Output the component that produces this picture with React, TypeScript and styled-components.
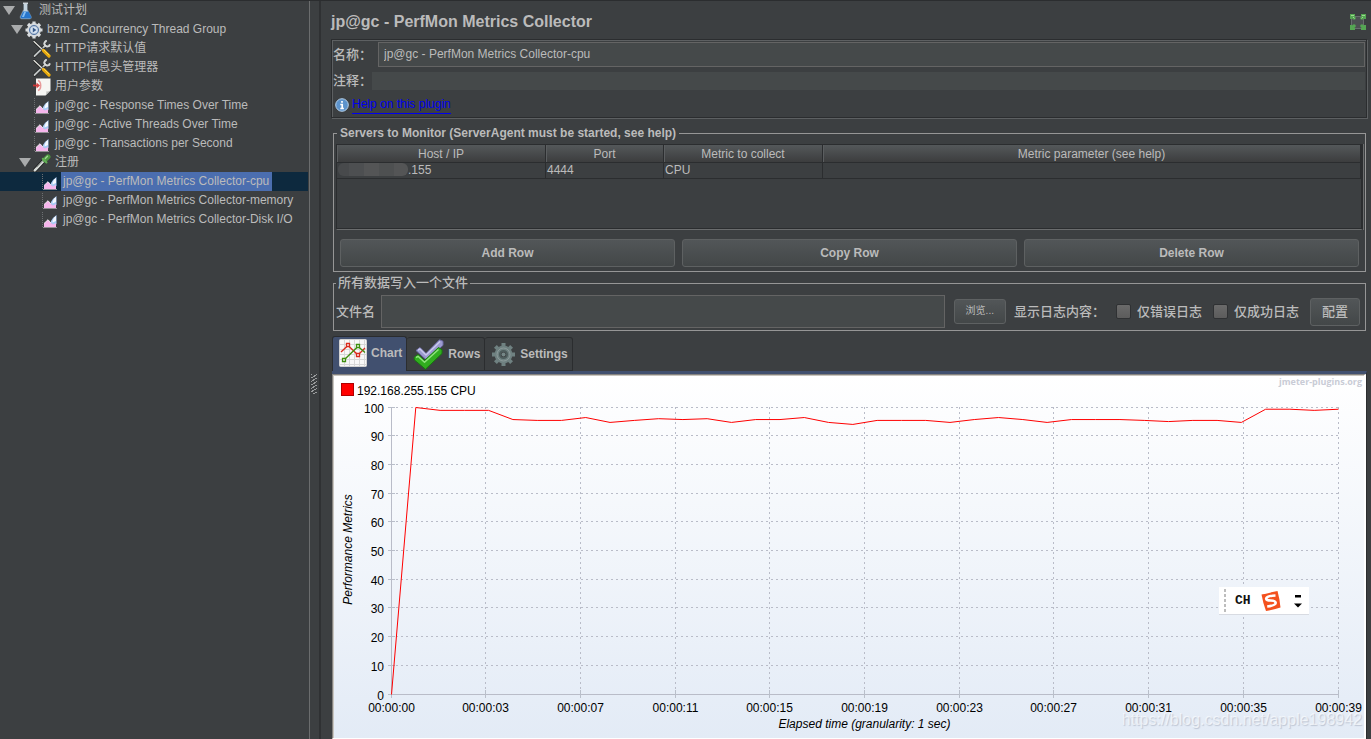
import React, { useLayoutEffect, useRef, useState } from "react";
import styled, { createGlobalStyle, css } from "styled-components";

const sans = `"Liberation Sans", Arial, "Noto Sans CJK SC", sans-serif`;

const GlobalStyle = createGlobalStyle`
  *, *::before, *::after { box-sizing: border-box; }
  body {
    margin: 0;
    background: #3c3f41;
    color: #bbbbbb;
    font: 12px/14px ${sans};
  }
  button, input { font: inherit; color: inherit; }
`;

const Window = styled.div`
  display: flex;
  min-height: 100vh;
  border-top: 1px solid #2b2d2f;
`;

/* ---------- test plan tree ---------- */

const Sidebar = styled.nav`
  flex: 0 0 310px;
  padding-right: 1px;
  border-right: 1px solid #6b6d6e;
`;

const Tree = styled.ul`
  list-style: none;
  margin: 0;
  padding: 0;
`;

const TreeRow = styled.li<{ $level: number; $selected?: boolean }>`
  display: flex;
  align-items: center;
  gap: 2px;
  height: 19px;
  padding-left: ${(p) => 3 + p.$level * 8}px;
  background: ${(p) => (p.$selected ? "#0d293e" : "transparent")};
  white-space: nowrap;
`;

const TreeArrow = styled.span<{ $open?: boolean }>`
  flex: none;
  width: 12px;
  height: 9px;
  background: ${(p) => (p.$open ? "#a9abac" : "transparent")};
  clip-path: polygon(0 0, 100% 0, 50% 100%);
`;

const TreeIcon = styled.span`
  flex: none;
  display: flex;
  width: 18px;
  height: 18px;
`;

const TreeLabel = styled.span<{ $selected?: boolean }>`
  padding: 0 3px 0 2px;
  line-height: 19px;
  background: ${(p) => (p.$selected ? "#4b6eaf" : "transparent")};
`;

const Splitter = styled.div`
  flex: 0 0 11px;
  display: flex;
  align-items: center;
  border-right: 2px solid #2f3133;
  padding-left: 1px;
`;

const Grip = styled.span`
  width: 6px;
  height: 20px;
  margin-top: 28px;
  background: repeating-linear-gradient(150deg, #9a9c9d 0 1px, #3c3f41 1px 3px);
`;

/* ---------- right hand side ---------- */

const Main = styled.main`
  flex: 1;
  min-width: 0;
  display: flex;
  flex-direction: column;
  padding: 0 4px 0 10px;
`;

const Header = styled.header`
  display: flex;
  justify-content: space-between;
  align-items: center;
  height: 38px;
  padding: 4px 1px 0 0;
`;

const Title = styled.h1`
  margin: 0;
  font-size: 16px;
  line-height: 20px;
`;

const IconButton = styled.button`
  display: flex;
  padding: 0;
  border: 0;
  background: none;
`;

const InfoPanel = styled.section`
  display: flex;
  flex-direction: column;
  height: 79px;
  padding: 2px 1px 0;
  border: 1px solid #2b2d2f;
  box-shadow: 1px 1px 0 #5d6062, inset 1px 1px 0 #5d6062;
`;

const Field = styled.div<{ $gap: number }>`
  display: flex;
  align-items: center;
  gap: ${(p) => p.$gap}px;
  & + & { margin-top: 5px; }
`;

const FormLabel = styled.label`
  flex: none;
  font-size: 13px;
  font-weight: 500;
  line-height: 18px;
  white-space: nowrap;
`;

const TextInput = styled.input<{ $plain?: boolean }>`
  flex: 1;
  min-width: 0;
  height: ${(p) => (p.$plain ? 18 : 25)}px;
  padding: 0 5px 2px;
  border: ${(p) => (p.$plain ? "0" : "1px solid #646464")};
  background: #45494a;
  outline: none;
`;

const FileInput = styled(TextInput)`
  height: 33px;
`;

const HelpRow = styled.div`
  display: flex;
  align-items: center;
  gap: 3px;
  margin-top: 6px;
  padding-left: 2px;
`;

const HelpLink = styled.a`
  color: #0000ee;
  text-decoration: none;
  border-bottom: 1px solid #0000ee;
  line-height: 16px;
  height: 18px;
`;

const Group = styled.fieldset`
  min-width: 0;
  margin: 8px 1px 0 2px;
  padding: 4px 2px;
  border: 1px solid #969696;
  & + & { margin-top: 4px; padding: 5px 5px 2px 2px; }
`;

const Legend = styled.legend<{ $large?: boolean }>`
  margin-left: ${(p) => (p.$large ? 0 : 1)}px;
  padding: 0 ${(p) => (p.$large ? 2 : 3)}px;
  font-size: ${(p) => (p.$large ? 13 : 12)}px;
  font-weight: ${(p) => (p.$large ? 500 : "bold")};
  line-height: 14px;
  height: 14px;
`;

const TableBox = styled.div`
  height: 86px;
  border: 1px solid #2b2d2f;
  border-right-width: 2px;
  border-bottom: 1px solid #6b6d6e;
  box-shadow: inset 0 -1px 0 #2b2d2f, 1px 0 0 #6b6d6e;
`;

const Table = styled.table`
  width: 100%;
  table-layout: fixed;
  border-collapse: separate;
  border-spacing: 0;
`;

const HeadCell = styled.th<{ $width?: number }>`
  ${(p) => p.$width && css`width: ${p.$width}px;`}
  height: 18px;
  padding: 0;
  background: linear-gradient(#54585a, #3c3d3e);
  border-right: 1px solid #2b2d2f;
  border-bottom: 1px solid #2b2d2f;
  box-shadow: inset 1px 0 0 #5b5e60;
  font-weight: normal;
`;

const Cell = styled.td`
  height: 16px;
  padding: 0 0 1px 1px;
  line-height: 14px;
  border-right: 1px solid #2b2d2f;
  border-bottom: 1px solid #2b2d2f;
`;

const MaskedHost = styled.span`
  display: inline-block;
  vertical-align: top;
  width: 70px;
  height: 13px;
  border-radius: 6px;
  background: linear-gradient(90deg, #484a4c 0 11px, #4d4f51 11px 26px, #545556 26px 41px, #4e5051 41px 56px, #545556 56px);
`;

const ButtonRow = styled.div`
  display: grid;
  grid-template-columns: repeat(3, 1fr);
  gap: 7px;
  margin: 9px 4px 0 4px;
`;

const Button = styled.button<{ $small?: boolean }>`
  flex: none;
  height: ${(p) => (p.$small ? 25 : 28)}px;
  padding: 0 11px 1px;
  border: 1px solid #5e6162;
  border-radius: 3px;
  background: linear-gradient(#525658, #434748);
  font-size: ${(p) => (p.$small ? 10 : 12)}px;
  font-weight: ${(p) => (p.$small ? "normal" : "bold")};
  white-space: nowrap;
`;

const ConfigButton = styled(Button)`
  width: 50px;
  padding: 0;
  font-size: 13px;
  font-weight: 500;
`;

const FileRow = styled.div`
  display: flex;
  align-items: center;
  gap: 6px;
`;

const LogOptions = styled.div`
  display: flex;
  align-items: center;
  gap: 11px;
  padding-left: 3px;
`;

const BrowseGroup = styled.div`
  display: flex;
  align-items: center;
  gap: 8px;
`;

const CheckLabel = styled(FormLabel)`
  display: flex;
  align-items: center;
  gap: 6px;
`;

const Checkbox = styled.input`
  appearance: none;
  width: 15px;
  height: 15px;
  margin: 0;
  border: 1px solid #2f3133;
  border-radius: 2px;
  background: linear-gradient(#6a6a6a, #5c5c5c);
`;

/* ---------- tabs and chart ---------- */

const Tabs = styled.div`
  display: flex;
  align-items: flex-end;
  height: 35px;
  margin: 5px 0 0 1px;
`;

const Tab = styled.button<{ $active?: boolean }>`
  display: flex;
  align-items: center;
  gap: 4px;
  height: ${(p) => (p.$active ? 35 : 34)}px;
  padding: 0 4px ${(p) => (p.$active ? 2 : 0)}px 6px;
  border: 1px solid #2b2d2f;
  border-left-width: ${(p) => (p.$active ? 1 : 0)}px;
  border-bottom: ${(p) => (p.$active ? "0" : "1px solid #2b2d2f")};
  border-radius: 3px 3px 0 0;
  background: ${(p) => (p.$active ? "#41506f" : "transparent")};
  font-weight: bold;
`;

const ChartPane = styled.section`
  position: relative;
  flex: 1;
  display: flex;
  flex-direction: column;
  min-height: 300px;
  border-right: 1px solid #2b2d2f;
  border-top: 3px solid #41506f;
  margin-left: 1px;
`;

const Plot = styled.div`
  flex: 1;
  display: flex;
  min-height: 0;
  border: 1px solid #84827f;
  border-right: 2px solid #fff;
  border-bottom: 1px solid #fff;
  background: linear-gradient(#ffffff, #e3ebf6);
  box-shadow: inset 1px 1px 0 #c9c6c0;
`;

const ChartSvg = styled.svg`
  flex: 1;
  min-width: 0;
  min-height: 0;
  font: 12px ${sans};
  fill: #000;
`;

const ImeBar = styled.div`
  position: absolute;
  right: 57px;
  bottom: 124px;
  display: flex;
  align-items: center;
  width: 90px;
  height: 28px;
  padding: 0 7px 0 5px;
  background: #fff;
  border-bottom: 1px solid #d8dbe2;
  color: #111;
`;

const ImeGrip = styled.span`
  width: 2px;
  height: 24px;
  margin-right: 9px;
  background: repeating-linear-gradient(#bdbdbd 0 3px, #fff 3px 5px);
`;

const ImeLang = styled.span`
  width: 25px;
  font: bold 13px "Liberation Mono", monospace;
`;

const ImeMenu = styled.span`
  display: flex;
  margin-left: auto;
`;

const Watermark = styled.span`
  position: absolute;
  right: 4px;
  bottom: 9px;
  color: rgba(255, 255, 255, 0.6);
  font-size: 16px;
  line-height: 20px;
  text-shadow: 1px 1px 1px rgba(120, 130, 150, 0.35);
`;

/* ---------- icons ---------- */

const FlaskIcon = () => (
  <svg width="18" height="18" viewBox="0 0 18 18">
    <path d="M6.500 1.500h4v6l3.800 7.200q.6 2-1.400 2.300H4.500q-2-.3-1.400-2.300l3.400-7.200z" fill="#c4d4df" stroke="#66727c" strokeWidth=".7" />
    <path d="M6 9.500h5.600l2.700 5.500q.2 1.300-1 1.500H4.500q-1.300-.2-1-1.500z" fill="#2776cc" />
    <path d="M7 10h2l-2 5H5z" fill="#84bdf2" />
    <path d="M6 1.200h5" stroke="#e6eef3" strokeWidth="1.200" />
  </svg>
);

const ThreadGroupIcon = () => (
  <svg width="18" height="18" viewBox="0 0 18 18">
    <g fill="#d9dde0" stroke="#d9dde0">
      <circle cx="9" cy="9" r="6.400" />
      <path d="M9 .5v17M.5 9h17M3 3l12 12M15 3L3 15" strokeWidth="3.200" />
    </g>
    <circle cx="9" cy="9" r="4.600" fill="#a9bdd6" stroke="#5878a5" />
    <circle cx="9" cy="9" r="3.300" fill="#d5e2f1" />
    <path d="M7.800 6.600l3.600 2.400-3.600 2.400z" fill="#36598b" />
  </svg>
);

const ToolsIcon = () => (
  <svg width="18" height="18" viewBox="0 0 18 18" fill="none" strokeLinecap="round">
    <path d="M1.500 16L12.500 5.300" stroke="#1e2021" strokeWidth="3.200" />
    <path d="M1.500 16L12.500 5.300" stroke="#bfc3c3" strokeWidth="1.800" />
    <path d="M12 2q-1.500 2 .2 3.600T16 6M12 2l1-1M16 6l.6-1" stroke="#d6d9d9" strokeWidth="2" />
    <path d="M1 1.500L10 10" stroke="#1e2021" strokeWidth="2.800" />
    <path d="M1 1.500L10 10" stroke="#e2e2dc" strokeWidth="1.300" />
    <path d="M10.500 10.500l5.500 5.500" stroke="#e8a90c" strokeWidth="3.200" />
    <path d="M11 10l5 5" stroke="#ffd54a" strokeWidth="1" />
  </svg>
);

const ParamsIcon = () => (
  <svg width="18" height="18" viewBox="0 0 18 18">
    <path d="M3 .5h14.500v12l-5 5H3z" fill="#f6f6f3" />
    <path d="M17.500 12.500l-5 5q1.500-2 .8-4.200 2 .6 4.200-.8z" fill="#bcbdba" />
    <path d="M5 2.500q2.700 1 2.700 5T5 12.500" stroke="#e79a9a" strokeWidth="1.500" fill="none" />
    <path d="M0 7.500h4.500" stroke="#cc3333" strokeWidth="1.800" fill="none" />
    <path d="M3.500 4.500L7 7.500l-3.500 3z" fill="#d84545" />
  </svg>
);

const GraphIcon = () => (
  <svg width="18" height="18" viewBox="0 0 18 18">
    <path d="M1.500 1v16" stroke="#6d7072" strokeDasharray="1 1" />
    <path d="M10 12.500q-.5-3 2-5.500l3.500-3v9l-3 2z" fill="#a9cbf5" />
    <path d="M11.500 11.500q0-4 3.500-6.500v5z" fill="#f5f9ff" />
    <path d="M3 16v-3.500l4-3.800 3 3.300 2 1.500 3-1.500V16z" fill="#f6b6ec" />
    <path d="M3 12.500l4-3.800 3 3.300" fill="none" stroke="#fff" strokeWidth=".8" />
    <path d="M2 16.500h14" stroke="#a9a5ab" strokeWidth=".8" />
  </svg>
);

const SamplerIcon = () => (
  <svg width="18" height="18" viewBox="0 0 18 18" strokeLinecap="round">
    <path d="M2 16l9-9.500" stroke="#202223" strokeWidth="4" />
    <path d="M1.800 16.300L11.500 6" stroke="#d9ddd9" strokeWidth="2.500" />
    <path d="M4 13l6-6.500" stroke="#8c928e" strokeWidth="1" />
    <path d="M12 5.800l3-3" stroke="#4c9440" strokeWidth="5" />
    <path d="M9.800 4.800l3.700 3.700" stroke="#62ad55" strokeWidth="2" />
    <path d="M12.300 4.500l2.200-2.300" stroke="#a3d896" strokeWidth="1.300" />
  </svg>
);

const InfoIcon = () => (
  <svg width="14" height="14" viewBox="0 0 14 14">
    <circle cx="7" cy="7" r="6.300" fill="#5c93cc" stroke="#b4cfe8" />
    <path d="M7 3v1.800M5.300 6.500H7.200v4M5.300 10.500h3.600" stroke="#fff" strokeWidth="1.700" fill="none" />
  </svg>
);

const ExpandIcon = () => (
  <svg width="16" height="16" viewBox="0 0 16 16">
    <rect x="1.500" y="2.500" width="12" height="12" fill="#4c5052" stroke="#686c6e" />
    <g fill="#55a653">
      <path d="M0 0h5v2L2 5H0zM16 0v5h-2l-3-3V0zM0 16v-5h2l3 3v2zM16 16h-5v-2l3-3h2z" />
      <circle cx="4" cy="4" r="1.800" />
      <circle cx="12" cy="4" r="1.800" />
      <circle cx="4" cy="12" r="1.800" />
      <circle cx="12" cy="12" r="1.800" />
    </g>
    <path d="M1 1.500h3M12 1.500h3M3 3l1.500 1.500M13 3l-1.500 1.500" stroke="#9bdc8c" />
  </svg>
);

const ChartTabIcon = () => (
  <svg width="28" height="28" viewBox="0 0 28 28" fill="none">
    <rect x=".5" y=".5" width="27" height="27" rx="1" fill="#f8f8f8" stroke="#d2d2d2" />
    <path d="M5.500 1v26M10.500 1v26M15.500 1v26M20.500 1v26M25.500 1v26M1 5.500h26M1 10.500h26M1 15.500h26M1 20.500h26M1 25.500h26" stroke="#d8d8d8" />
    <path d="M2 13L9 6.500 19 16l7-7" stroke="#d92b1e" strokeWidth="1.300" />
    <path d="M5 21L19 7.500l7 6" stroke="#3f8f0f" strokeWidth="1.300" />
    <g fill="#fff" strokeWidth="1.300">
      <path d="M7.500 4.500h3v3h-3zM17.500 14.500h3v3h-3z" stroke="#d92b1e" />
      <path d="M3.500 19.500h3v3h-3zM17.500 5.500h3v3h-3z" stroke="#3f8f0f" />
    </g>
  </svg>
);

const CheckTabIcon = () => (
  <svg width="31" height="31" viewBox="0 0 31 31" strokeLinejoin="round">
    <path d="M3 11.500l4-3 6 6L26.500.800l3.500 1.500v4L13.500 21z" fill="#9c9bd0" stroke="#6d6ba6" />
    <path d="M5 11l2-1 6 6L27 2.500" stroke="#c9c8ee" strokeWidth="1.500" fill="none" />
    <path d="M1 18.500l4-3 6.500 6L25.500 8.500l3.500 2.300v3.700L12.500 30.200 1.500 21z" fill="#31ad1f" stroke="#177a0e" />
    <path d="M3 18.500l2-1.200 6.500 6L25.500 10.500" stroke="#8ee37d" strokeWidth="1.500" fill="none" />
  </svg>
);

const GearTabIcon = () => (
  <svg width="25" height="25" viewBox="0 0 25 25">
    <g stroke="#6f8181" fill="#6f8181">
      <path d="M12.500 1v23M1 12.500h23M4.400 4.400l16.200 16.200M20.600 4.400L4.400 20.600" strokeWidth="4" />
      <circle cx="12.500" cy="12.500" r="8.500" />
    </g>
    <circle cx="12.500" cy="12.500" r="6.500" fill="none" stroke="#8b9a9a" />
    <circle cx="12.500" cy="12.500" r="3.600" fill="#3c3f41" stroke="#4d5c5c" strokeWidth="2" />
    <circle cx="12.500" cy="12.500" r="2" fill="#758787" />
  </svg>
);

const SogouIcon = () => (
  <svg width="22" height="22" viewBox="0 0 22 22">
    <path d="M1.500 4.500Q10 2.500 17.500 1q2 7 3 16.500-7 2-14.500 3.500Q3 13 1.500 4.500z" fill="#f4511e" />
    <path d="M15.500 5.500Q7 6 6.200 8.500q-.2 2 4.500 2t5 2.500q-.2 2.500-8.500 3.500" fill="none" stroke="#fff" strokeWidth="2.600" />
  </svg>
);

const ImeMenuIcon = () => (
  <svg width="8" height="14" viewBox="0 0 8 14">
    <path d="M1 1h6v2.500H1zM0 9.500h8l-4 4z" fill="#000" />
  </svg>
);

/* ---------- data ---------- */

const treeItems = [
  { label: "测试计划", level: 0, icon: <FlaskIcon />, open: true },
  { label: "bzm - Concurrency Thread Group", level: 1, icon: <ThreadGroupIcon />, open: true },
  { label: "HTTP请求默认值", level: 2, icon: <ToolsIcon /> },
  { label: "HTTP信息头管理器", level: 2, icon: <ToolsIcon /> },
  { label: "用户参数", level: 2, icon: <ParamsIcon /> },
  { label: "jp@gc - Response Times Over Time", level: 2, icon: <GraphIcon /> },
  { label: "jp@gc - Active Threads Over Time", level: 2, icon: <GraphIcon /> },
  { label: "jp@gc - Transactions per Second", level: 2, icon: <GraphIcon /> },
  { label: "注册", level: 2, icon: <SamplerIcon />, open: true },
  { label: "jp@gc - PerfMon Metrics Collector-cpu", level: 3, icon: <GraphIcon />, selected: true },
  { label: "jp@gc - PerfMon Metrics Collector-memory", level: 3, icon: <GraphIcon /> },
  { label: "jp@gc - PerfMon Metrics Collector-Disk I/O", level: 3, icon: <GraphIcon /> },
];

const cpu = [
  0, 100, 99, 99, 99, 95.8, 95.5, 95.5, 96.5, 94.8, 95.5, 96.1, 95.8, 96.1, 94.8, 95.8, 95.8, 96.5, 94.8, 94.1,
  95.5, 95.5, 95.5, 94.8, 95.8, 96.5, 95.8, 94.8, 95.8, 95.8, 95.8, 95.5, 95.1, 95.5, 95.5, 94.8, 99.4, 99.4, 99, 99.4,
];

const times = ["00", "03", "07", "11", "15", "19", "23", "27", "31", "35", "39"];

function Chart() {
  const ref = useRef<SVGSVGElement>(null);
  const [size, setSize] = useState({ w: 1030, h: 362 });

  useLayoutEffect(() => {
    const el = ref.current;
    if (!el) return;
    const measure = () => {
      const r = el.getBoundingClientRect();
      setSize({ w: r.width, h: r.height });
    };
    measure();
    const observer = new ResizeObserver(measure);
    observer.observe(el);
    return () => observer.disconnect();
  }, []);

  const left = 58;
  const right = size.w - 26;
  const top = 32;
  const bottom = size.h - 44;
  const px = (f: number) => left + (right - left) * f;
  const py = (v: number) => bottom - ((bottom - top) * v) / 100;
  const snap = (n: number) => Math.floor(n) + 0.5;
  const points = cpu.map((v, i) => `${px(i / (cpu.length - 1)) + 0.5},${py(v) + 0.5}`).join(" ");

  return (
    <ChartSvg ref={ref}>
      <rect x="8.500" y="8.500" width="12" height="12" fill="#ff0000" stroke="#b00000" />
      <text x="24" y="20">192.168.255.155 CPU</text>
      <text x={size.w - 2} y="10" textAnchor="end" fill="#c9ccd6" fontSize="9" fontWeight="bold" fontFamily="Open Sans, sans-serif">
        jmeter-plugins.org
      </text>
      {Array.from({ length: 11 }, (_, i) => {
        const y = snap(py(i * 10));
        return (
          <g key={i}>
            <line x1={left - 3} x2={left + 4} y1={y} y2={y} stroke="#b9bfca" />
            <line x1={left} x2={right} y1={y} y2={y} stroke="#b9bcc8" strokeDasharray={i ? "2 3" : undefined} />
            <text x={left - 7} y={y + 5} textAnchor="end">{i * 10}</text>
          </g>
        );
      })}
      {times.map((t, i) => {
        const x = snap(px(i / 10));
        return (
          <g key={t}>
            <line x1={x} x2={x} y1={top} y2={bottom} stroke="#b9bcc8" strokeDasharray={i ? "2 3" : undefined} />
            <line x1={x} x2={x} y1={bottom - 4} y2={bottom + 4} stroke="#b9bfca" />
            <text x={x} y={bottom + 18} textAnchor="middle">{`00:00:${t}`}</text>
          </g>
        );
      })}
      <polyline points={points} fill="none" stroke="#ff0000" />
      <text x={px(0.5)} y={bottom + 34} textAnchor="middle" fontStyle="italic">
        Elapsed time (granularity: 1 sec)
      </text>
      <text transform={`translate(19 ${(top + bottom) / 2 - 1}) rotate(-90)`} textAnchor="middle" fontStyle="italic">
        Performance Metrics
      </text>
    </ChartSvg>
  );
}

export default function App() {
  return (
    <Window>
      <GlobalStyle />
      <Sidebar>
        <Tree>
          {treeItems.map((item) => (
            <TreeRow key={item.label} $level={item.level} $selected={item.selected}>
              <TreeArrow $open={item.open} />
              <TreeIcon>{item.icon}</TreeIcon>
              <TreeLabel $selected={item.selected}>{item.label}</TreeLabel>
            </TreeRow>
          ))}
        </Tree>
      </Sidebar>
      <Splitter>
        <Grip />
      </Splitter>
      <Main>
        <Header>
          <Title>jp@gc - PerfMon Metrics Collector</Title>
          <IconButton aria-label="Maximize">
            <ExpandIcon />
          </IconButton>
        </Header>
        <InfoPanel>
          <Field $gap={6}>
            <FormLabel htmlFor="name">名称：</FormLabel>
            <TextInput id="name" defaultValue="jp@gc - PerfMon Metrics Collector-cpu" />
          </Field>
          <Field $gap={0}>
            <FormLabel htmlFor="comment">注释：</FormLabel>
            <TextInput id="comment" $plain />
          </Field>
          <HelpRow>
            <InfoIcon />
            <HelpLink href="#help">Help on this plugin</HelpLink>
          </HelpRow>
        </InfoPanel>

        <Group>
          <Legend>Servers to Monitor (ServerAgent must be started, see help)</Legend>
          <TableBox>
            <Table>
              <thead>
                <tr>
                  <HeadCell $width={209}>Host / IP</HeadCell>
                  <HeadCell $width={118}>Port</HeadCell>
                  <HeadCell $width={159}>Metric to collect</HeadCell>
                  <HeadCell>Metric parameter (see help)</HeadCell>
                </tr>
              </thead>
              <tbody>
                <tr>
                  <Cell><MaskedHost />.155</Cell>
                  <Cell>4444</Cell>
                  <Cell>CPU</Cell>
                  <Cell />
                </tr>
              </tbody>
            </Table>
          </TableBox>
          <ButtonRow>
            <Button>Add Row</Button>
            <Button>Copy Row</Button>
            <Button>Delete Row</Button>
          </ButtonRow>
        </Group>

        <Group>
          <Legend $large>所有数据写入一个文件</Legend>
          <FileRow>
            <FormLabel htmlFor="file">文件名</FormLabel>
            <FileInput id="file" />
            <LogOptions>
              <BrowseGroup>
                <Button $small>浏览...</Button>
                <FormLabel as="span">显示日志内容：</FormLabel>
              </BrowseGroup>
              <CheckLabel><Checkbox type="checkbox" />仅错误日志</CheckLabel>
              <CheckLabel><Checkbox type="checkbox" />仅成功日志</CheckLabel>
              <ConfigButton>配置</ConfigButton>
            </LogOptions>
          </FileRow>
        </Group>

        <Tabs role="tablist">
          <Tab role="tab" aria-selected $active><ChartTabIcon />Chart</Tab>
          <Tab role="tab"><CheckTabIcon />Rows</Tab>
          <Tab role="tab"><GearTabIcon />Settings</Tab>
        </Tabs>
        <ChartPane>
          <Plot>
            <Chart />
          </Plot>
          <ImeBar>
            <ImeGrip />
            <ImeLang>CH</ImeLang>
            <SogouIcon />
            <ImeMenu>
              <ImeMenuIcon />
            </ImeMenu>
          </ImeBar>
          <Watermark>https://blog.csdn.net/apple198942</Watermark>
        </ChartPane>
      </Main>
    </Window>
  );
}
